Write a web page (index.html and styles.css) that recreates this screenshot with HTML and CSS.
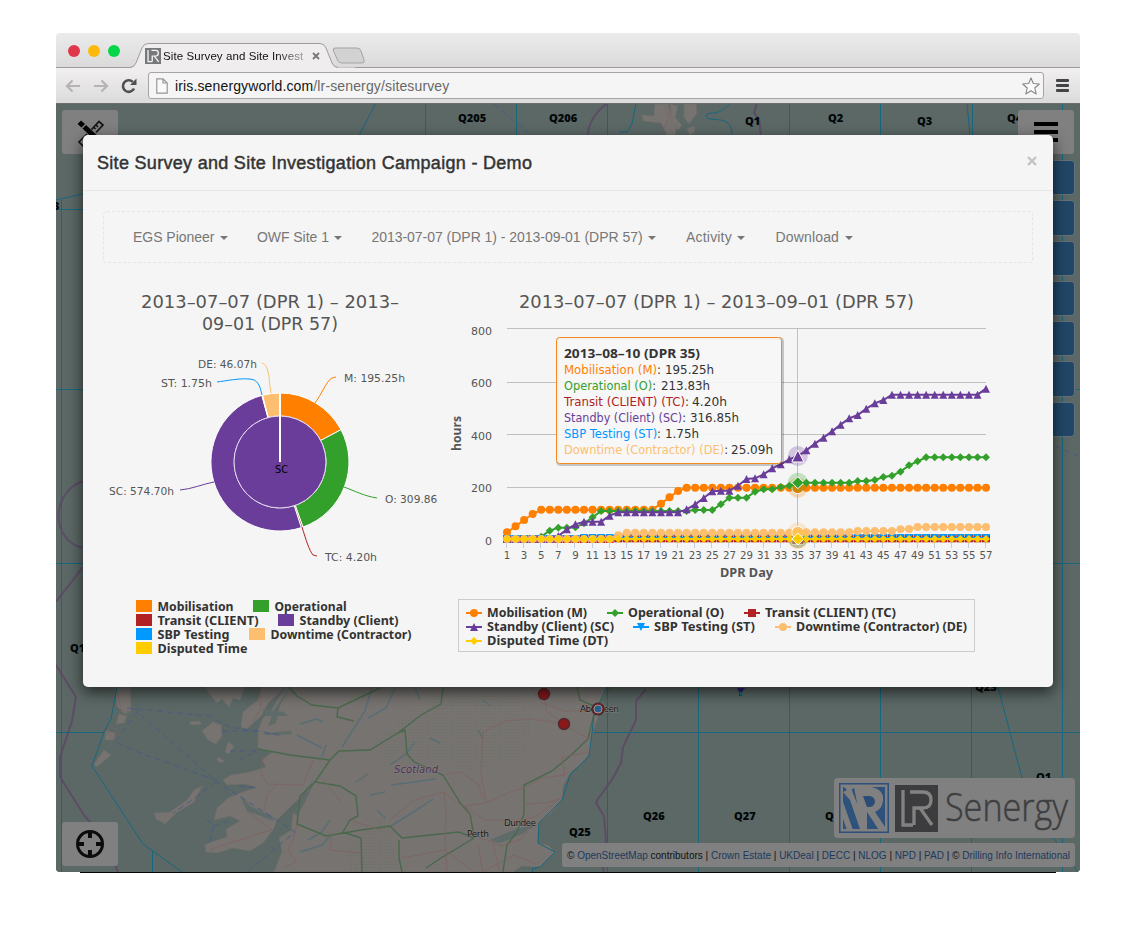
FILE: index.html
```html
<!DOCTYPE html>
<html lang="en">
<head>
<meta charset="utf-8">
<title>Site Survey and Site Investigation Campaign - Demo</title>
<link rel="stylesheet" href="styles.css">
</head>
<body>
<div class="window">
  <header class="tabbar">
    <i class="light red"></i><i class="light amber"></i><i class="light green"></i>
    <div class="tab">
      <svg class="tab-shape" width="226" height="26" viewBox="0 0 226 26"><path d="M0 24.5H1Q5 24.5 7 20L13 5Q15 .5 19 .5H191Q195 .5 197 5L203 20Q205 24.500 209 24.500H226V26H0Z" fill="#efeded"/><path d="M0 24.500H1Q5 24.500 7 20L13 5Q15 .5 19 .5H191Q195 .5 197 5L203 20Q205 24.500 209 24.500" fill="none" stroke="#a09a9c"/></svg>
      <div class="tab-content">
        <svg width="16" height="16" viewBox="0 0 42 46" preserveAspectRatio="none"><rect width="42" height="46" fill="#77787a"/><path d="M8 6V39H19M17 7H28Q35 7 35 15T27 23H19V39M24 23L36 40" fill="none" stroke="#f4f4f4" stroke-width="3.500"/></svg>
        <span class="tab-title">Site Survey and Site Invest</span>
        <svg class="tab-close" width="8" height="8" viewBox="0 0 8 8"><path d="M1 1L7 7M7 1L1 7" stroke="#777" stroke-width="1.800"/></svg>
      </div>
    </div>
    <svg class="newtab" width="34" height="18" viewBox="0 0 34 18"><path d="M3 1H25Q28 1 29 4L32 13Q33 16 30 16H10Q7 16 6 14L1.500 4Q.5 1 3 1Z" fill="#d3d2d3" stroke="#a5a2a4"/></svg>
  </header>
  <div class="toolbar">
    <svg class="nav" width="16" height="14" viewBox="0 0 16 14"><path d="M15 7H2M7.500 1.500L2 7L7.500 12.500" fill="none" stroke="#b5b3b4" stroke-width="2.200"/></svg>
    <svg class="nav" width="16" height="14" viewBox="0 0 16 14"><path d="M1 7H14M8.500 1.500L14 7L8.500 12.500" fill="none" stroke="#b5b3b4" stroke-width="2.200"/></svg>
    <svg class="reload" width="16" height="16" viewBox="0 0 16 16"><path d="M13 10.500A5.800 5.800 0 1 1 11.800 3.900" fill="none" stroke="#505052" stroke-width="2.600"/><path d="M15.500 .5V7H9Z" fill="#505052"/></svg>
    <div class="address">
      <svg width="12" height="16" viewBox="0 0 12 16"><path d="M.8 .8H7L11.200 5V15.200H.8ZM7 .8V5H11.200" fill="#fafafa" stroke="#979797" stroke-width="1.200"/></svg>
      <span class="url"><b>iris.senergyworld.com</b>/lr-senergy/sitesurvey</span>
      <svg class="star" width="18" height="18" viewBox="0 0 18 18"><path d="M9 1L11.300 6.500L17.300 7L12.800 11L14.200 17L9 13.800L3.800 17L5.200 11L.7 7L6.700 6.500Z" fill="#fbfbfb" stroke="#868686" stroke-width="1.100" stroke-linejoin="round"/></svg>
    </div>
    <div class="menu"><i></i><i></i><i></i></div>
  </div>
  <main class="page">
    <svg class="map" viewBox="56 103 1024 769" width="1024" height="769">
      <defs><pattern id="park" width="3" height="3" patternUnits="userSpaceOnUse"><path d="M0 0h1v1H0z" fill="#586f58" opacity=".45"/></pattern></defs>
      <rect x="56" y="103" width="1024" height="769" fill="#5b6865"/>
      <g class="land">
        <path d="M203 680L208 692L217 703L222 699L229 707L233 698L240 700L245 687L262 687L258 700L243 712L241 727L247 729L262 715L268 703L283 690L272 709L263 718L258 730L258 748L272 752L262 760L266 767L250 772L231 775L223 780L227 785L244 784L257 787L240 793L228 798L217 808L214 820L230 816L240 821L226 829L227 837L211 842L205 845L206 852L218 853L232 848L250 851L263 843L273 830L277 820L290 807L301 797L313 780L302 802L293 814L291 830L279 838L282 851L274 872H513L522 866L540 867L555 852L548 845L538 843L539 823L551 813L562 800L563 786L570 773L583 762L590 753L592 733L601 709L607 687V680Z"/>
        <path d="M115 687H130L131 710L125 714L117 706Z"/>
        <path d="M119 714L127 716L124 723L116 724ZM106 731L115 733L114 740L105 740ZM104 750L111 755L97 767L94 764ZM213 722L221 725L222 736L216 744L208 740L202 731ZM228 742L234 746L229 754L225 752ZM202 786L194 802L176 813L165 824L156 819L154 813L170 812L187 800L194 790ZM218 757l6 4-3 2-4-3ZM189 722l10-1 3 3-10 1Z"/>
        <path d="M655 104H668L671 116L678 120L675 135H667L661 123L643 121L642 115L654 116ZM684 104H696L697 113L689 124L684 117ZM670 104l8 2-3 12 7 7-4 5-6-7ZM687 129l7-3 1 5-5 4Z"/>
      </g>
      <path fill="url(#park)" d="M440 687L520 690L531 722L525 757L475 770L440 761L405 760L390 730L415 710ZM346 850L385 815L400 872H352ZM375 742L400 722V752L384 772Z"/>
      <path class="water" d="M490 840L516 829L538 824L520 835L500 843ZM293 812L309 790L316 779L305 802L297 816ZM290 688L280 705L276 723L268 726L275 708ZM262 709L284 712L288 716L266 716ZM240 795L250 806L273 817L274 821L247 811ZM264 733L291 731L292 734L265 735Z"/>
      <path class="loch" d="M372 687L365 711L342 747M300 724l17-5 6 3M286 685L279 696M297 735L322 748M322 757L326 745M396 686L386 708L368 718M390 765L406 754L415 742M330 820L322 832L308 840M391 785L414 782L436 779M391 826L415 811L433 799M300 852l22-7 8-9M356 782l12-8M370 795l15-3M377 810l8 8M415 687L420 700M482 700l9 6M478 730l5 8M430 738l10 5"/>
      <path class="aroad" d="M289 687L297 696L312 705L338 708L357 699L380 688M338 708L337 717L354 721M258 749L290 755L330 760L339 751L370 750L383 742L398 733L421 715L441 704L443 687M330 760L315 782L340 786L356 796L358 816L350 820L343 832L361 838L362 872M315 782L300 796L297 824L326 836L361 830L390 826L402 838L459 832L474 838M398 733L405 730L407 754L414 762L443 775L461 804L470 814L474 836M474 838L441 858L426 868M588 739L569 757L552 771L524 785L524 814L517 832L507 845L503 872M611 687L594 714L588 739M577 687L580 700L596 707M399 840V858L402 872"/>
      <path class="broad" d="M263 757L261 772L267 784L303 785L313 760M277 785L267 795L264 811M247 811L272 830L264 832L211 849M261 687L260 711L253 721M481 774L483 732L505 721L528 719L548 721L564 724M530 687L542 703L564 711L600 711M544 694L546 711L564 724L578 733L592 740M481 774L486 803L510 792L524 788L542 778L565 775M486 803L465 806L470 814M524 804L547 803L561 798L538 815L524 820L485 820L461 804M446 774L461 772L478 784L483 798M390 820L414 800L444 792L459 804M444 792L446 812L445 839L447 872M474 836L490 841L502 846L521 839L535 820M478 845L483 872L514 855L536 864M493 842L499 870M565 775L562 757L590 752M297 825L293 840L288 850L296 862L283 868M332 832L330 850L360 853M326 783L341 802M350 820L380 830M117 690L121 710L130 712M112 726L119 733L113 739L107 732ZM665 106L669 118L661 133M402 858L445 850L474 872M558 690L540 692"/>
      <path class="ferry" d="M127 708L209 716L229 727L259 731L283 736M133 708L218 783L277 820L295 832L247 872M137 712L115 742L135 751L218 781L189 802L173 813M222 731H259M230 751H256L240 760M239 786L257 788M207 819L213 826L210 843M213 826L231 820M494 104L531 135M1055 446L1080 457"/>
      <path class="boundary" d="M56 665L76 697L72 721L60 757V777L84 815L105 840L118 872M56 602L83 567M83 481C50 493 51 541 83 548M608 103C597 110 588 123 588 135M646 689L636 701L636 720L623 747L621 763L613 778L598 799L596 803L604 816L606 840L600 858L604 872M757 103L754 113L759 119L761 135"/>
      <path class="grid" d="M61.500 200V872M56 209.500H83M56 389.500H83M56 563.500H83M56 732.500H104M594 732.500H1080M425.500 103V135M516.500 103V135M607.500 103V135M789.500 103V135M880.500 103V135M972.500 103V135M1062.500 103V872M607.500 687V872M698.500 687V872M789.500 687V872M880.500 687V872M971.500 687V872M1052 389.500H1080M1052 563.500H1080M152.500 851V872M532.500 869V872"/>
      <path class="grid" d="M376 103L353 147M56 200L83 194M117 687L111 719L104 732L92 766L143 844L182 872M636 103L632 124L627 132H619M730 103C718 118 708 110 706 116C708 124 732 112 732 135M967 103L970 135M998 687L1022 778M1053 837L1078 872M607 687L594 714L592 733L589 756L570 775L562 800L539 823L538 843L555 852L540 867L532 869"/>
      <g class="block"><text x="458" y="122">Q205</text><text x="549" y="122">Q206</text><text x="745" y="125">Q1</text><text x="828" y="122">Q2</text><text x="917" y="125">Q3</text><text x="1007" y="122">Q4</text><text x="53" y="210">3</text><text x="70" y="652">Q1</text><text x="643" y="820">Q26</text><text x="734" y="820">Q27</text><text x="825" y="820">Q28</text><text x="569" y="836">Q25</text><text x="975" y="691">Q23</text><text x="1036" y="781">Q1</text></g>
      <g class="place"><text x="580" y="712" textLength="39">Aberdeen</text><text x="504" y="826" textLength="32">Dundee</text><text x="467" y="837" textLength="22">Perth</text><text class="country" x="394" y="773" textLength="44">Scotland</text></g>
      <g fill="#8b1719" stroke="#522a30" stroke-width="1.500"><circle cx="544" cy="694" r="5.500"/><circle cx="564" cy="724" r="5.500"/><circle cx="598" cy="709" r="5.800"/></g>
      <circle cx="598" cy="709" r="4" fill="#28608a" stroke="#96999a"/>
      <path d="M737 688H745L742 692V696H739V692Z" fill="#2d1e79"/><path d="M740 691l3 3-2 2-2-2Z" fill="#167476"/>
    </svg>

    <div class="map-button tools"><svg width="28" height="28" viewBox="0 0 28 28"><path d="M1.500 4L5 .5L9 4L5.500 7.500ZM6.500 8.500L10 5L24 18L20.500 22ZM22 24l4 2-1-5Z" fill="#050505"/><path d="M15.500 9.500L23 1.500L27 5L20 12.500M11 14L3 22L7 26L14.500 18.500M20 5l2 2M18 7.500l1.500 1.500" fill="none" stroke="#151515" stroke-width="1.700"/></svg></div>
    <div class="map-button layers"><i></i><i></i><i></i></div>
    <div class="map-button locate"><svg width="28" height="28" viewBox="0 0 28 28"><circle cx="14" cy="14" r="12.500" fill="none" stroke="#0b0b0b" stroke-width="3"/><path d="M14 2V8M14 20V26M2 14H8M20 14H26" stroke="#0b0b0b" stroke-width="4"/></svg></div>
    <div class="side-buttons"><i></i><i></i><i></i><i></i><i></i><i></i><i></i></div>
    <div class="brand">
      <svg width="50" height="50" viewBox="0 0 50 50"><rect x=".75" y=".75" width="48.500" height="48.500" fill="none" stroke="#2d4f7b" stroke-width="1.500"/><path d="M4 4H46V46H4Z" fill="#2f527c"/><path d="M3 16L14 47H8L3 33ZM4 9L12 5L28 46H21L11 17ZM15 4H32Q45 6 44 18Q43 26 36 29L46 44V47H40L28 29V47H25L20 30ZM4 3H17L10 9Z" fill="#808080"/><path d="M24 13H31Q36 14 36 19Q35 24 30 24H28Z" fill="#2b4c77"/></svg>
      <svg width="43" height="47" viewBox="0 0 43 47"><rect width="43" height="47" fill="#3c3c3e"/><path d="M8 5V40H18M15 7H28Q36 7 36 15T28 23H19V40M25 23L37 40" fill="none" stroke="#828282" stroke-width="3.300"/></svg>
      <svg class="brand-name" width="130" height="56"><text x="1" y="41" textLength="123" lengthAdjust="spacingAndGlyphs">Senergy</text></svg>
    </div>
    <p class="credits">© <a>OpenStreetMap</a> contributors | <a>Crown Estate</a> | <a>UKDeal</a> | <a>DECC</a> | <a>NLOG</a> | <a>NPD</a> | <a>PAD</a> | © <a>Drilling Info International</a></p>

    <section class="modal">
      <div class="modal-header"><h1>Site Survey and Site Investigation Campaign - Demo</h1><svg width="10" height="10" viewBox="0 0 10 10"><path d="M1 1L9 9M9 1L1 9" stroke="#c3c3c3" stroke-width="2.400"/></svg></div>
      <div class="modal-body">
        <nav class="filters"><span>EGS Pioneer</span><span>OWF Site 1</span><span>2013-07-07 (DPR 1) - 2013-09-01 (DPR 57)</span><span class="wide">Activity</span><span class="wide">Download</span></nav>
        <div class="charts">
          <svg id="pie" width="334" height="400" viewBox="103 275 334 400"></svg>
          <svg id="line" width="596" height="400" viewBox="437 275 596 400"></svg>
        </div>
      </div>
    </section>
  </main>
</div>
<div class="baseline"></div>
<script src="charts.js"></script>
</body>
</html>
```

FILE: styles.css
```css
* { box-sizing: border-box; }
body { margin: 0; background: #fff; font-family: "Liberation Sans", Arial, sans-serif; }
svg { display: block; flex: none; }
.window { width: 1024px; height: 839px; margin: 33px 0 0 56px; display: flex; flex-direction: column; border-radius: 4px; overflow: hidden; }
.baseline { width: 976px; height: 1px; margin-left: 80px; background: #050505; }

.tabbar { height: 35px; display: flex; align-items: flex-start; background: linear-gradient(#ebebeb, #dadada); border-bottom: 1px solid #a09a9c; padding-left: 12px; }
.light { width: 12px; height: 12px; border-radius: 50%; margin: 12px 8px 0 0; }
.red { background: #e0384a; }
.amber { background: #fdba0b; }
.green { background: #06d749; }
.tab { display: grid; width: 226px; height: 26px; margin: 10px 0 0 1px; }
.tab-shape, .tab-content { grid-area: 1 / 1; }
.tab-content { display: flex; align-items: center; padding: 0 18px 0 16px; z-index: 1; height: 26px; }
.tab-title { width: 145px; margin-left: 2px; margin-right: 4px; font-size: 11.500px; letter-spacing: .08px; white-space: nowrap; background: linear-gradient(90deg, #111 78%, #bbb); background-clip: text; -webkit-background-clip: text; color: transparent; }
.newtab { margin: 14px 0 0 -23px; }

.toolbar { height: 35px; display: flex; align-items: center; padding: 0 11px 0 9px; background: linear-gradient(#f1efef, #dcdbdb); }
.nav { margin-right: 12px; }
.reload { margin-right: 11px; }
.address { flex: 1; height: 27px; display: flex; align-items: center; padding: 0 3px 0 7px; background: #f5f5f5; border: 1px solid #a8a3a5; border-radius: 3px; }
.url { flex: 1; margin-left: 7px; font-size: 14px; letter-spacing: .14px; color: #686868; }
.url b { color: #111; font-weight: 400; }
.menu { display: grid; gap: 2px; margin-left: 12px; }
.menu i { width: 13px; height: 3px; border-radius: 1px; background: #454548; }

.page { position: relative; height: 769px; background: #5b6865; overflow: hidden; border-top: 1px solid #6c6d6c; }
.map { margin-top: -1px; }
.land path { fill: #767370; stroke: #706e6b; stroke-width: .6; }
.water { fill: #5e6b69; }
.loch, .aroad, .broad, .ferry, .boundary, .grid { fill: none; }
.loch { stroke: #596e74; stroke-width: 1.500; }
.aroad { stroke: #4a694c; stroke-width: 1.400; }
.broad { stroke: #806261; stroke-width: .8; }
.ferry { stroke: #4a5a83; stroke-width: .9; stroke-dasharray: 6 4; }
.boundary { stroke: #5d4c66; stroke-width: 2; }
.grid { stroke: #17677f; stroke-width: 1; }
.block { font: 800 11px "Open Sans", "Noto Sans", sans-serif; fill: #020709; }
.place { font: 9px "DejaVu Sans", sans-serif; fill: #171719; paint-order: stroke; stroke: #88827e; stroke-width: 1px; }
.country { font-style: italic; font-size: 10px; fill: #4b315a; }

.map-button { position: absolute; width: 56px; height: 44px; border-radius: 3px; background: #808080; display: flex; align-items: center; justify-content: center; }
.tools { left: 6px; top: 6px; align-items: flex-start; padding-top: 10px; }
.locate { left: 6px; bottom: 6px; }
.layers { right: 6px; top: 6px; display: grid; gap: 4px; align-content: center; }
.layers i { width: 24px; height: 4px; background: #020202; }
.side-buttons { position: absolute; right: 5px; top: 56px; display: grid; gap: 5px; }
.side-buttons i { width: 44px; height: 35.300px; background: #214768; border: 1px solid #667078; border-radius: 4px; }
.brand { position: absolute; left: 778px; top: 674px; width: 241px; height: 60px; border-radius: 4px; background: #808080; display: flex; align-items: center; padding-left: 5px; gap: 6px; }
.brand-name text { font: 300 39px "Open Sans", "Noto Sans", sans-serif; fill: #3e3e40; stroke: #3e3e40; stroke-width: .5px; }
.credits { position: absolute; right: 5px; bottom: 5px; width: 513px; height: 24px; line-height: 25px; margin: 0; padding-left: 5px; font-size: 10px; color: #111; background: #808080; border-radius: 3px; white-space: nowrap; }
.credits a { color: #1c3a5c; }

.modal { position: absolute; left: 27px; top: 31px; width: 970px; height: 552px; background: #f5f5f5; border-radius: 5px; box-shadow: 0 5px 15px rgba(0,0,0,.65); }
.modal-header { height: 56px; padding: 0 16px 0 14px; border-bottom: 1px solid #e8e8e8; display: flex; align-items: center; justify-content: space-between; }
.modal-header h1 { margin: 2px 0 0; font-size: 18px; letter-spacing: .3px; font-weight: 400; color: #333; -webkit-text-stroke: .45px #333; }
.modal-header svg { margin-top: -4px; }
.modal-body { padding: 20px; }
.filters { height: 52px; border: 1px dashed #e5e5e5; border-radius: 4px; display: flex; align-items: center; gap: 29px; padding-left: 29px; font-size: 14px; letter-spacing: -.03px; color: #777; white-space: nowrap; }
.filters span { display: flex; align-items: center; gap: 5.500px; }
.filters .wide { letter-spacing: .18px; margin-left: 1px; }
.filters span::after { content: ""; border: 4px solid transparent; border-top-color: #777; border-bottom: 0; margin-top: 2px; }
.charts { display: flex; margin-top: 12px; }
.charts text { font-family: "DejaVu Sans", "Noto Sans", sans-serif; white-space: pre; }
.charts .bold { font-family: "Noto Sans", sans-serif; font-weight: 700; }
```

FILE: charts.js
```js
const NS = "http://www.w3.org/2000/svg";
const C = { M: "#ff8000", O: "#33a02c", TC: "#b22222", SC: "#6a3d9a", ST: "#0099ff", DE: "#fdbf6f", DT: "#ffcc00" };

function add(parent, tag, attrs, text) {
  const el = document.createElementNS(NS, tag);
  for (const k in attrs) el.setAttribute(k, attrs[k]);
  if (text !== undefined) el.textContent = text;
  parent.appendChild(el);
  return el;
}
function label(parent, x, y, text, size, fill, width, bold) {
  const a = { x, y, "font-size": size, fill };
  if (width) { a.textLength = width; a.lengthAdjust = "spacingAndGlyphs"; }
  if (bold) a.class = "bold";
  return add(parent, "text", a, text);
}

/* Pie */
const pie = document.getElementById("pie");
label(pie, 141, 308, "2013–07–07 (DPR 1) – 2013–", 18, "#555", 258);
label(pie, 202, 330, "09–01 (DPR 57)", 18, "#555", 136);
const cx = 280, cy = 462, R = 69, r = 46;
const slices = [["M", 195.25], ["O", 309.86], ["TC", 4.2], ["SC", 574.7], ["ST", 1.75], ["DE", 46.07]];
const total = slices.reduce((s, v) => s + v[1], 0);
let angle = 0;
const pt = (a, rad) => (cx + rad * Math.sin(a)).toFixed(2) + " " + (cy - rad * Math.cos(a)).toFixed(2);
for (const [key, value] of slices) {
  const end = angle + value / total * Math.PI * 2;
  const big = end - angle > Math.PI ? 1 : 0;
  add(pie, "path", { d: `M${pt(angle, R)}A${R} ${R} 0 ${big} 1 ${pt(end, R)}L${pt(end, r)}A${r} ${r} 0 ${big} 0 ${pt(angle, r)}Z`, fill: C[key], stroke: "#fff", "stroke-width": 1 });
  angle = end;
}
add(pie, "circle", { cx, cy, r, fill: C.SC, stroke: "#e4d9ee", "stroke-width": 1 });
add(pie, "path", { d: "M280 393V462", stroke: "#fff", "stroke-width": 2 });
label(pie, 275, 473, "SC", 11, "#000", 13);
[["M", "M315 403C320 397 327 380 332 378L336 377"], ["O", "M344 487C355 491 364 496 377 498"], ["TC", "M302 527C306 540 309 550 313 555L317 556"],
 ["SC", "M214 482C203 484 192 489 180 490"], ["ST", "M262 395C260 386 258 379 249 379C240 378 225 381 217 382"], ["DE", "M271 393C269 384 270 365 262 363"]]
  .forEach(([k, d]) => add(pie, "path", { d, fill: "none", stroke: C[k], "stroke-width": 1 }));
label(pie, 198, 368, "DE: 46.07h", 11, "#555", 59);
label(pie, 161, 387, "ST: 1.75h", 11, "#555", 51);
label(pie, 344, 382, "M: 195.25h", 11, "#555", 61);
label(pie, 109, 495, "SC: 574.70h", 11, "#555", 65);
label(pie, 325, 561, "TC: 4.20h", 11, "#555", 52);
label(pie, 385, 503, "O: 309.86h", 11, "#555", 59);
[["M", "Mobilisation", 136, 600, 76], ["O", "Operational", 253, 600, 72], ["TC", "Transit (CLIENT)", 136, 614, 101], ["SC", "Standby (Client)", 278, 614, 99],
 ["ST", "SBP Testing", 136, 628, 72], ["DE", "Downtime (Contractor)", 249, 628, 141], ["DT", "Disputed Time", 136, 642, 90]]
  .forEach(([k, name, x, y, w]) => {
    add(pie, "rect", { x, y, width: 16, height: 12, fill: C[k] });
    label(pie, x + 21.500, y + 11, name, 12, "#333", w, true);
  });

/* Cumulative hours */
const line = document.getElementById("line");
label(line, 519, 308, "2013–07–07 (DPR 1) – 2013–09–01 (DPR 57)", 18, "#555", 395);
[["800", 335, 328.5], ["600", 387, 382.5], ["400", 440, 434.5], ["200", 492, 487.5], ["0", 545, 540.5]].forEach(([v, ty, gy]) => {
  label(line, v === "0" ? 485 : 471, ty, v, 11, "#555", v === "0" ? 7 : 21);
  if (v !== "0") add(line, "path", { d: `M507 ${gy}H986`, stroke: "#c0c0c0" });
});
const title = label(line, 0, 0, "hours", 12, "#555", 35, true);
title.setAttribute("transform", "translate(461 451) rotate(-90)");
label(line, 720, 577, "DPR Day", 12, "#555", 53, true);
const X = d => 507 + (d - 1) * 8.554;
for (let d = 1; d <= 57; d += 2) {
  add(line, "path", { d: `M${Math.round(X(d)) - .5} 541V548`, stroke: "#c0d0e0" });
  label(line, X(d), 559, String(d), 11, "#555", d < 10 ? 6.5 : 13).setAttribute("text-anchor", "middle");
}
add(line, "path", { d: "M797.5 329V540", stroke: "#c0c0c0" });

const run = (v, n) => Array(n).fill(v);
/* Vertical positions in thirds of a pixel below y = 280 */
const series = {
  M: [757, 739, 720, 702, ...run(689, 14), 671, 652, 633, ...run(623, 36)],
  O: [...run(777, 4), 770, 752, 743, 743, 742, 730, 712, ...run(693, 11), 690, 690, 690, 673, 653, 653, 653, 635, 628, 628, 621, 617, ...run(608, 7), 603, 603, 600, 591, 587, 575, 556, 544, ...run(532, 8)],
  TC: [...run(777, 13), ...run(775, 44)],
  SC: [...run(777, 6), 768, 748, 733, 725, 725, 725, 707, ...run(697, 8), 688, 673, 654, 634, 632, 632, 617, 597, 595, 583, 565, 553, 538, 528, 511, 491, 473, 454, 434, 415, 405, 386, 370, 360, ...run(344, 11), 326],
  ST: [...run(777, 9), ...run(774, 48)],
  DE: [...run(777, 13), 766, ...run(758, 20), ...run(757, 7), ...run(753, 5), 748, 747, ...run(741, 9)],
  DT: run(777, 57)
};
function marker(parent, key, x, y, s, stroke) {
  const shapes = {
    M: `M${x - s} ${y}a${s} ${s} 0 1 1 ${2 * s} 0a${s} ${s} 0 1 1 ${-2 * s} 0Z`,
    O: `M${x} ${y - s}L${x + s} ${y}L${x} ${y + s}L${x - s} ${y}Z`,
    TC: `M${x - s} ${y - s}h${2 * s}v${2 * s}h${-2 * s}Z`,
    SC: `M${x} ${y - s}L${x + s} ${y + s}H${x - s}Z`,
    ST: `M${x - s} ${y - s}H${x + s}L${x} ${y + s}Z`
  };
  shapes.DE = shapes.M;
  shapes.DT = shapes.O;
  add(parent, "path", { d: shapes[key], fill: C[key], stroke: stroke || "none" });
}
for (const key in series) {
  const pts = series[key].map((v, i) => [X(i + 1), 280 + v / 3]);
  add(line, "polyline", { points: pts.map(p => p.join(",")).join(" "), fill: "none", stroke: C[key], "stroke-width": 2 });
  add(line, "circle", { cx: pts[34][0], cy: pts[34][1], r: 10, fill: C[key], opacity: .25 });
  pts.forEach(([x, y], i) => i === 34 ? marker(line, key, x, y, 6, "#fff") : marker(line, key, x, y, 4));
}

/* Tooltip */
add(line, "rect", { x: 557.5, y: 338.5, width: 225, height: 126, rx: 3, fill: "none", stroke: "#000", "stroke-opacity": .2, "stroke-width": 3 });
add(line, "rect", { x: 556.5, y: 337.5, width: 225, height: 126, rx: 3, fill: "#f7f7f7", "fill-opacity": .88, stroke: "#f28a1d" });
label(line, 564, 358, "2013–08–10 (DPR 35)", 12, "#333", 136, true);
[["M", "Mobilisation (M)", "195.25h", 374, 94, 665, 49], ["O", "Operational (O)", "213.83h", 390, 89, 661, 49], ["TC", "Transit (CLIENT) (TC)", "4.20h", 406, 122, 692, 35],
 ["SC", "Standby (Client) (SC)", "316.85h", 422, 119, 690, 49], ["ST", "SBP Testing (ST)", "1.75h", 438, 94, 665, 34], ["DE", "Downtime (Contractor) (DE)", "25.09h", 454, 161, 731, 42]]
  .forEach(([k, name, value, y, w, vx, vw]) => {
    const row = label(line, 564, y, name, 12, C[k], w + 3);
    add(row, "tspan", { fill: "#333" }, ":");
    label(line, vx, y, value, 12, "#333", vw);
  });

/* Legend */
add(line, "rect", { x: 458.5, y: 599.5, width: 516, height: 52, fill: "none", stroke: "#ccc" });
[["M", "Mobilisation (M)", 466, 613, 100], ["O", "Operational (O)", 607, 613, 96], ["TC", "Transit (CLIENT) (TC)", 744, 613, 131], ["SC", "Standby (Client) (SC)", 466, 627, 127],
 ["ST", "SBP Testing (ST)", 633, 627, 101], ["DE", "Downtime (Contractor) (DE)", 775, 627, 171], ["DT", "Disputed Time (DT)", 466, 641, 121]]
  .forEach(([k, name, x, y, w]) => {
    add(line, "path", { d: `M${x} ${y}h16`, stroke: C[k], "stroke-width": 2 });
    marker(line, k, x + 8, y, 4);
    label(line, x + 21, y + 4, name, 12, "#333", w, true);
  });
```
